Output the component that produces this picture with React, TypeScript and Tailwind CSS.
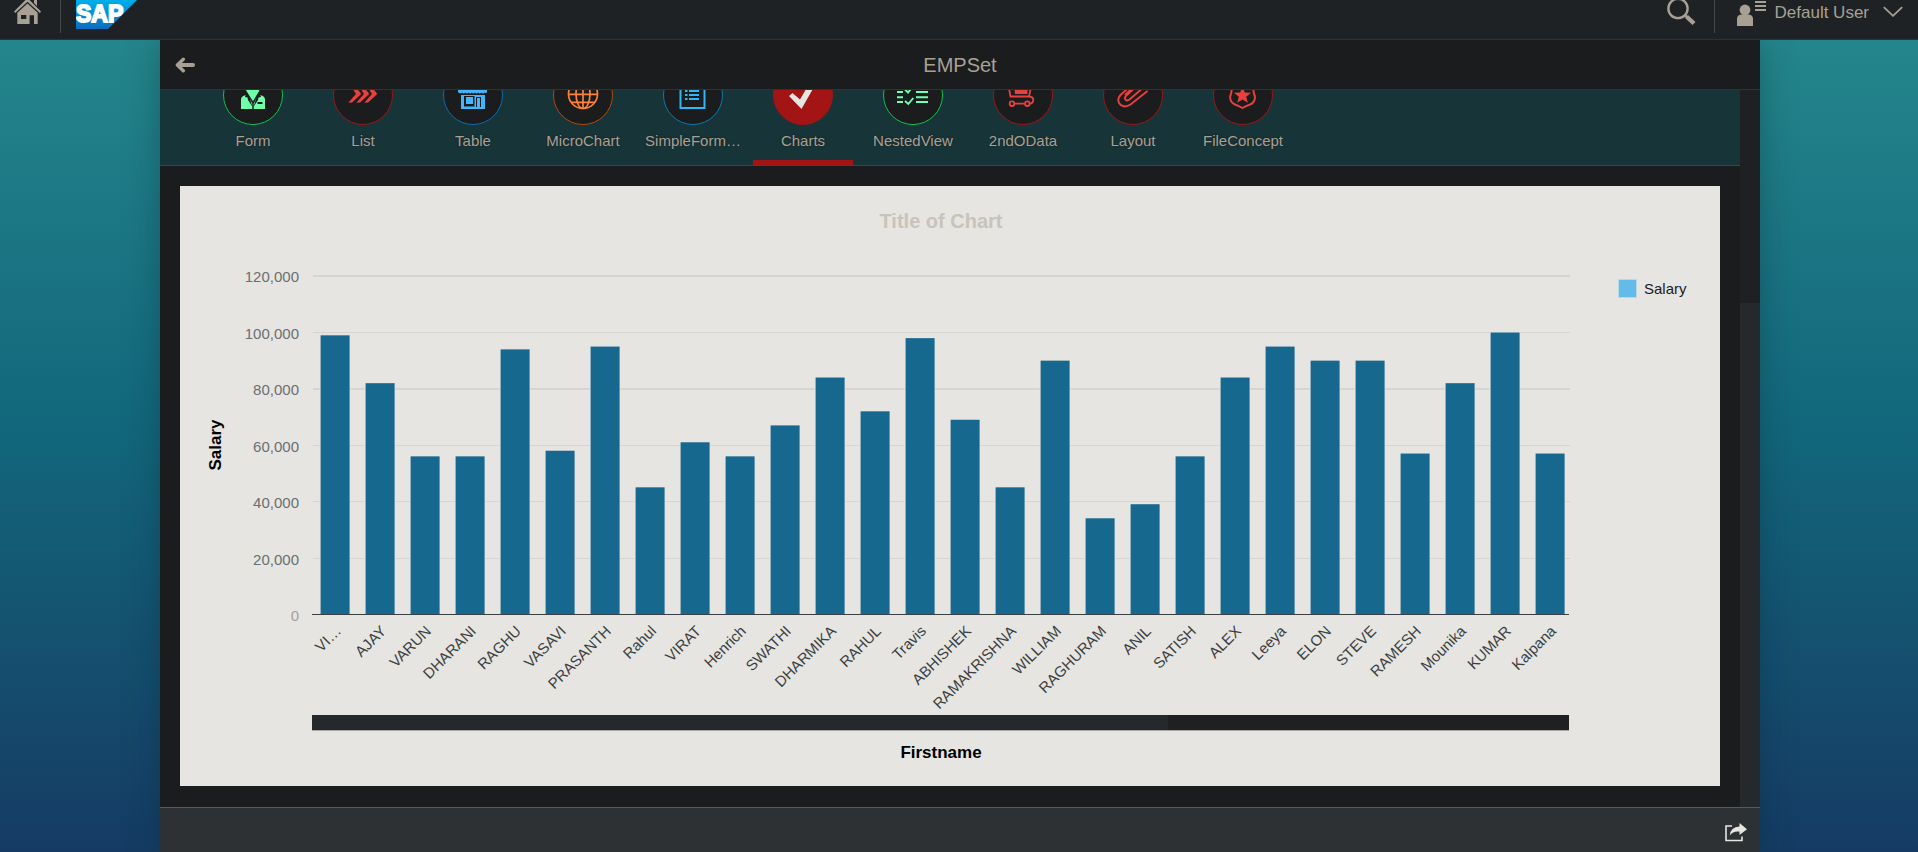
import type { ReactNode } from "react";

const BG = "#1b1c1e";

type Tab = { label: string; ring: string; icon: ReactNode; active?: boolean };

const chevron = (dx: number) => (
  <path key={dx} d={`M${dx + 14.7} 38 L${dx + 22.5} 29 L${dx + 17} 20 H${dx + 21} L${dx + 28.2} 28 V29.6 L${dx + 19} 38 Z`} fill="#e8403c" stroke={BG} strokeWidth="0.8" />
);

const tabs: Tab[] = [
  {
    label: "Form",
    ring: "border-[#0fc24e]",
    icon: (
      <>
        <path d="M18 44 V34.5 Q18.3 31.5 21.5 30.6 L24.5 29.5 L29.3 38.5 V44 Z M30.7 44 V38.5 L35.5 29.5 L38.5 30.6 Q41.7 31.5 42 34.5 V44 Z" fill="#70ffa8" />
        <path d="M21.5 20 H37.5 L36.5 26 L30 37 L23 26 Z" fill="#70ffa8" stroke={BG} strokeWidth="0.8" />
        <path d="M23.5 27 L22 32 L24.5 32.5 L25 35 L29.6 42 L26 31 Z M36.5 27 L38 32 L35.5 32.5 L35 35 L30.4 42 L34 31 Z" fill={BG} />
        <rect x="34.5" y="37" width="5" height="2" fill={BG} />
      </>
    ),
  },
  { label: "List", ring: "border-[#a01414]", icon: <>{[0, 8, 16].map(chevron)}</> },
  {
    label: "Table",
    ring: "border-[#0c6cb0]",
    icon: (
      <>
        <path d="M15 20 H44 V27 Q43 29 41.6 27.4 Q40 29.4 38.4 27.4 Q36.8 29.4 35.2 27.4 Q33.6 29.4 32 27.4 Q30.4 29.4 28.8 27.4 Q27.2 29.4 25.6 27.4 Q24 29.4 22.4 27.4 Q20.8 29.4 19.2 27.4 Q17 29.4 15 27 Z" fill="#42b6ff" />
        <path fillRule="evenodd" d="M18 30 H42 V44 H18 Z M21 31 V41.5 H31.5 V31 Z M33 32 V42 H38 V32 Z" fill="#42b6ff" />
        <rect x="23" y="32" width="7" height="7" fill="#42b6ff" />
        <rect x="34" y="33" width="3" height="11" fill="#42b6ff" />
      </>
    ),
  },
  {
    label: "MicroChart",
    ring: "border-[#b04a0c]",
    icon: (
      <g fill="none" stroke="#ff8036" strokeWidth="1.7">
        <circle cx="30" cy="29" r="14.5" />
        <ellipse cx="30" cy="29" rx="7" ry="14.5" />
        <path d="M30 14 V44 M15.5 29.3 H44.5 M18 37.3 H42 M18 21 H42" />
      </g>
    ),
  },
  {
    label: "SimpleForm…",
    ring: "border-[#0c78b0]",
    icon: (
      <>
        <rect x="17.5" y="16" width="24" height="27" fill="none" stroke="#2cb8f6" strokeWidth="2" />
        <path d="M26 22 H36 M26 26 H36 M26 30 H36 M26 34 H36 M22 22 H24.5 M22 26 H24.5 M22 30 H24.5 M22 34 H24.5" stroke="#2cb8f6" strokeWidth="1.8" />
      </>
    ),
  },
  {
    label: "Charts",
    ring: "border-[#a31414]",
    active: true,
    icon: <path d="M16 31 L19.5 28 L27 34.5 L36 19 L41 22 L28.5 44 Z" fill="#e6e5e1" />,
  },
  {
    label: "NestedView",
    ring: "border-[#0fc24e]",
    icon: (
      <path
        d="M14 27 H20 M33 27 H45 M14 32.3 H20 M33 32.3 H45 M14 37 H20 M33 37 H45 M22 24.5 L25 27.5 L29.5 22 M22 36 L25.3 39 L30.3 33"
        fill="none"
        stroke="#70ffb0"
        strokeWidth="1.9"
      />
    ),
  },
  {
    label: "2ndOData",
    ring: "border-[#a01414]",
    icon: (
      <g fill="none" stroke="#e8403c" strokeWidth="1.8">
        <path d="M15 18 L17.5 31.5 H36 L38.5 20" />
        <path d="M21 20 H34.5 V29 H22 Z" fill="#e8403c" stroke="none" />
        <path d="M36 31.5 Q40.5 32 40.3 35 Q40 38.5 37 38.7 M22 38.7 H31" />
        <circle cx="19" cy="38.7" r="2.3" />
        <circle cx="34.3" cy="38.7" r="2.3" />
      </g>
    ),
  },
  {
    label: "Layout",
    ring: "border-[#a01414]",
    icon: (
      <path
        d="M44.5 26 L27.5 39.5 Q22 43.3 17.5 39.8 Q13 35 17.5 30 L33 16 M22 30 L36 17 M41 22 L26.5 34.5 Q24 36.3 22.4 34.5 Q21.2 32.6 23.3 30.5 L36 19"
        fill="none"
        stroke="#e8403c"
        strokeWidth="1.9"
      />
    ),
  },
  {
    label: "FileConcept",
    ring: "border-[#a01414]",
    icon: (
      <>
        <path d="M18 20 Q19.5 26 17.3 31 Q16.5 37 22 39.5 Q26 41 29.5 43 Q33 41 37 39.5 Q42.7 37 41.8 31 Q39.5 26 41 20" fill="none" stroke="#e8403c" strokeWidth="2" />
        <path d="M29.5 21.5 L31.8 27.5 L38 27.8 L33.2 31.8 L34.8 37.8 L29.5 34.4 L24.2 37.8 L25.8 31.8 L21 27.8 L27.2 27.5 Z" fill="#e8403c" />
      </>
    ),
  },
];

const employees: [string, number][] = [
  ["VI…", 99], ["AJAY", 82], ["VARUN", 56], ["DHARANI", 56], ["RAGHU", 94], ["VASAVI", 58], ["PRASANTH", 95],
  ["Rahul", 45], ["VIRAT", 61], ["Henrich", 56], ["SWATHI", 67], ["DHARMIKA", 84], ["RAHUL", 72], ["Travis", 98],
  ["ABHISHEK", 69], ["RAMAKRISHNA", 45], ["WILLIAM", 90], ["RAGHURAM", 34], ["ANIL", 39], ["SATISH", 56],
  ["ALEX", 84], ["Leeya", 95], ["ELON", 90], ["STEVE", 90], ["RAMESH", 57], ["Mounika", 82], ["KUMAR", 100], ["Kalpana", 57],
];

const gridLines = [
  { label: "120,000", y: 90, w: 2 },
  { label: "100,000", y: 146.5, w: 1 },
  { label: "80,000", y: 203, w: 2 },
  { label: "60,000", y: 259.5, w: 1 },
  { label: "40,000", y: 315.5, w: 1 },
  { label: "20,000", y: 372.5, w: 1 },
  { label: "0", y: 428.5, w: 0 },
];

const FIRST_CENTER = 155;
const BAND = 45;
const BASE = 428;

function SalaryChart() {
  return (
    <svg viewBox="0 0 1540 600" className="block h-auto w-full bg-[#e6e5e1]" role="img" aria-label="Salary by Firstname">
      <text x="761" y="42" textAnchor="middle" className="fill-[#c8c3bc] text-[20px] font-bold">Title of Chart</text>
      {gridLines.map((g) => (
        <g key={g.label}>
          {g.w > 0 && <line x1="133" x2="1390" y1={g.y} y2={g.y} stroke="#d6d5d0" strokeWidth={g.w} />}
          <text x="119" y={Math.round(g.y) + 6} textAnchor="end" className={g.w > 0 ? "fill-[#6a6f73] text-[15px]" : "fill-[#a9a095] text-[15px]"}>
            {g.label}
          </text>
        </g>
      ))}
      {employees.map(([name, salary], i) => {
        const center = FIRST_CENTER + BAND * i;
        const height = salary * 2.815;
        return (
          <g key={name}>
            <rect x={center - 15.3} y={BASE - height - 0.5} width="30.5" height={height + 0.5} fill="#e6e5e1" />
            <rect x={center - 14.4} y={BASE - height} width="29" height={height} fill="#17688f" />
            <text x={center + 7} y="446" textAnchor="end" transform={`rotate(-45 ${center + 7} 446)`} className="fill-[#3b3f42] text-[15px]">
              {name}
            </text>
          </g>
        );
      })}
      <rect x="132" y="428" width="1257" height="1" fill="#3c4043" />
      <rect x="132" y="529" width="1257" height="16" fill="#a5a5a3" />
      <rect x="132" y="529" width="1257" height="15" fill="#1f2022" />
      <rect x="132" y="529" width="856" height="15" fill="#25292c" />
      <text x="761" y="572" textAnchor="middle" className="fill-black text-[17px] font-bold">Firstname</text>
      <text x="41" y="259" textAnchor="middle" transform="rotate(-90 41 259)" className="fill-black text-[17px] font-bold">Salary</text>
      <rect x="1438.5" y="93.5" width="18" height="18" fill="#62bbe8" stroke="#b9d9e6" />
      <text x="1464" y="108" className="fill-[#1b1c1e] text-[15px]">Salary</text>
    </svg>
  );
}

function SapLogo() {
  return (
    <svg width="62" height="29" viewBox="0 0 62 29" aria-label="SAP" role="img">
      <defs>
        <linearGradient id="sap" x1="0" y1="0" x2="0" y2="1">
          <stop offset="0" stopColor="#00aeea" />
          <stop offset="1" stopColor="#0a6dc0" />
        </linearGradient>
      </defs>
      <path d="M0 0 H61 L32 29 H0 Z" fill="url(#sap)" />
      <text x="0" y="22" fill="#fff" stroke="#fff" strokeWidth="1.8" className="text-[23px] font-bold">SAP</text>
    </svg>
  );
}

export default function App() {
  return (
    <div className="flex h-screen flex-col overflow-hidden bg-linear-to-b from-[#26898e] via-[#12677b] to-[#153b64] font-['Liberation_Sans',Arial,sans-serif] text-[#a9a095]">
      <header className="relative z-10 flex h-10 shrink-0 items-start border-b border-[#303335] bg-[#1f2224]">
        <button aria-label="Home" className="flex h-[33px] w-[61px] items-start border-r border-[#44484b] pl-3.5">
          <svg width="27" height="24" viewBox="0 0 27 24" fill="currentColor">
            <path d="M0 11.5 L11.5 0 H15.5 L27 11.5 L25.8 13 L13.5 1.8 L1.2 13 Z M20 0 H23 V6 L20 3 Z" />
            <path fillRule="evenodd" d="M3.3 12.8 L13.5 3.4 L23.7 12.8 V24 H20 V15.2 H15.6 V24 H3.3 Z M7 15 V19 H12.3 V15 Z" />
          </svg>
        </button>
        <a href="#home" className="ml-[15px] block"><SapLogo /></a>
        <div className="ml-auto flex h-[33px] items-start">
          <button aria-label="Search" className="pr-[18px]">
            <svg width="29" height="26" viewBox="0 0 29 26" fill="none" stroke="currentColor">
              <circle cx="11" cy="8.5" r="9.6" strokeWidth="2.4" />
              <path d="M17.5 14.5 L20 17" strokeWidth="2.4" />
              <path d="M19.5 16.5 L27 23.5" strokeWidth="4.4" />
            </svg>
          </button>
          <button className="flex h-full items-start border-l border-[#44484b] pr-[15px] pl-[22px]">
            <svg width="30" height="26" viewBox="0 0 30 26" fill="currentColor">
              <circle cx="8" cy="10" r="5.4" />
              <path d="M0 26 V19 Q0 15 4 14.4 H12 Q16 15 16 19 V26 Z" />
              <path d="M18 1 H29 V3 H18 Z M18 5 H29 V7 H18 Z M18 9 H29 V11 H18 Z" />
            </svg>
            <span className="ml-2 pt-[3px] text-[17px] leading-5">Default User</span>
            <svg width="20" height="18" viewBox="0 0 20 18" fill="none" stroke="currentColor" strokeWidth="1.8" className="ml-3.5">
              <path d="M0.8 7.2 L10 15.8 L19.2 7.2" />
            </svg>
          </button>
        </div>
      </header>

      <div className="mr-[158px] ml-40 flex min-h-0 flex-1 flex-col bg-[#1b1c1e] shadow-[0_0_32px_rgba(0,40,50,0.35)]">
        <div className="grid h-[50px] shrink-0 grid-cols-[48px_1fr_48px] items-center border-b border-[#303335]">
          <button aria-label="Back" className="pl-[15px]">
            <svg width="21" height="16" viewBox="0 0 21 16" fill="none" stroke="currentColor" strokeWidth="4" strokeLinecap="round" strokeLinejoin="round">
              <path d="M18 8 H3.5" />
              <path d="M8.3 2.2 L2.4 8 L8.3 13.8" strokeWidth="3.4" />
            </svg>
          </button>
          <h1 className="text-center text-[20px]">EMPSet</h1>
        </div>

        <div className="flex min-h-0 flex-1">
          <main className="min-w-0 flex-1 overflow-hidden">
            <nav className="-mt-[25px] flex gap-2.5 border-b border-[#3c4446] bg-[#173538] pl-[43px]">
              {tabs.map((t) => (
                <button key={t.label} className="flex h-[100px] w-[100px] shrink-0 flex-col items-center">
                  <span className={`block size-[60px] overflow-hidden rounded-full border ${t.ring} ${t.active ? "bg-[#a31414]" : "bg-[#1b1c1e]"}`}>
                    <svg width="60" height="60" viewBox="0 0 60 60" className="-m-px">{t.icon}</svg>
                  </span>
                  <span className="mt-1.5 text-[15px] leading-5 [text-shadow:0_0_2px_#1b1c1e]">{t.label}</span>
                  <span className={t.active ? "mt-auto block h-[5px] w-full bg-[#a31414]" : "mt-auto block h-[5px] w-full"} />
                </button>
              ))}
            </nav>
            <section className="p-5">
              <SalaryChart />
            </section>
          </main>
          <div className="flex w-5 shrink-0 flex-col bg-[#1f2022]">
            <div className="h-[213px]" />
            <div className="flex-1 bg-[#25292c]" />
          </div>
        </div>

        <footer className="flex h-[45px] shrink-0 items-center justify-end border-t border-[#5c5a56] bg-[#2d3134] pr-[13px] text-[#e6e5e1]">
          <button aria-label="Share" className="pt-1">
            <svg width="22" height="19" viewBox="0 0 22 19" fill="none" stroke="currentColor">
              <path d="M7 3 H1 V17.5 H17 V13.5" strokeWidth="1.6" />
              <path d="M14.5 0 L22 6.2 L14.5 12 V8.6 Q8 7.8 4.8 12.5 Q5.5 4.2 14.5 3.6 Z" fill="currentColor" stroke="none" />
            </svg>
          </button>
        </footer>
      </div>
    </div>
  );
}
